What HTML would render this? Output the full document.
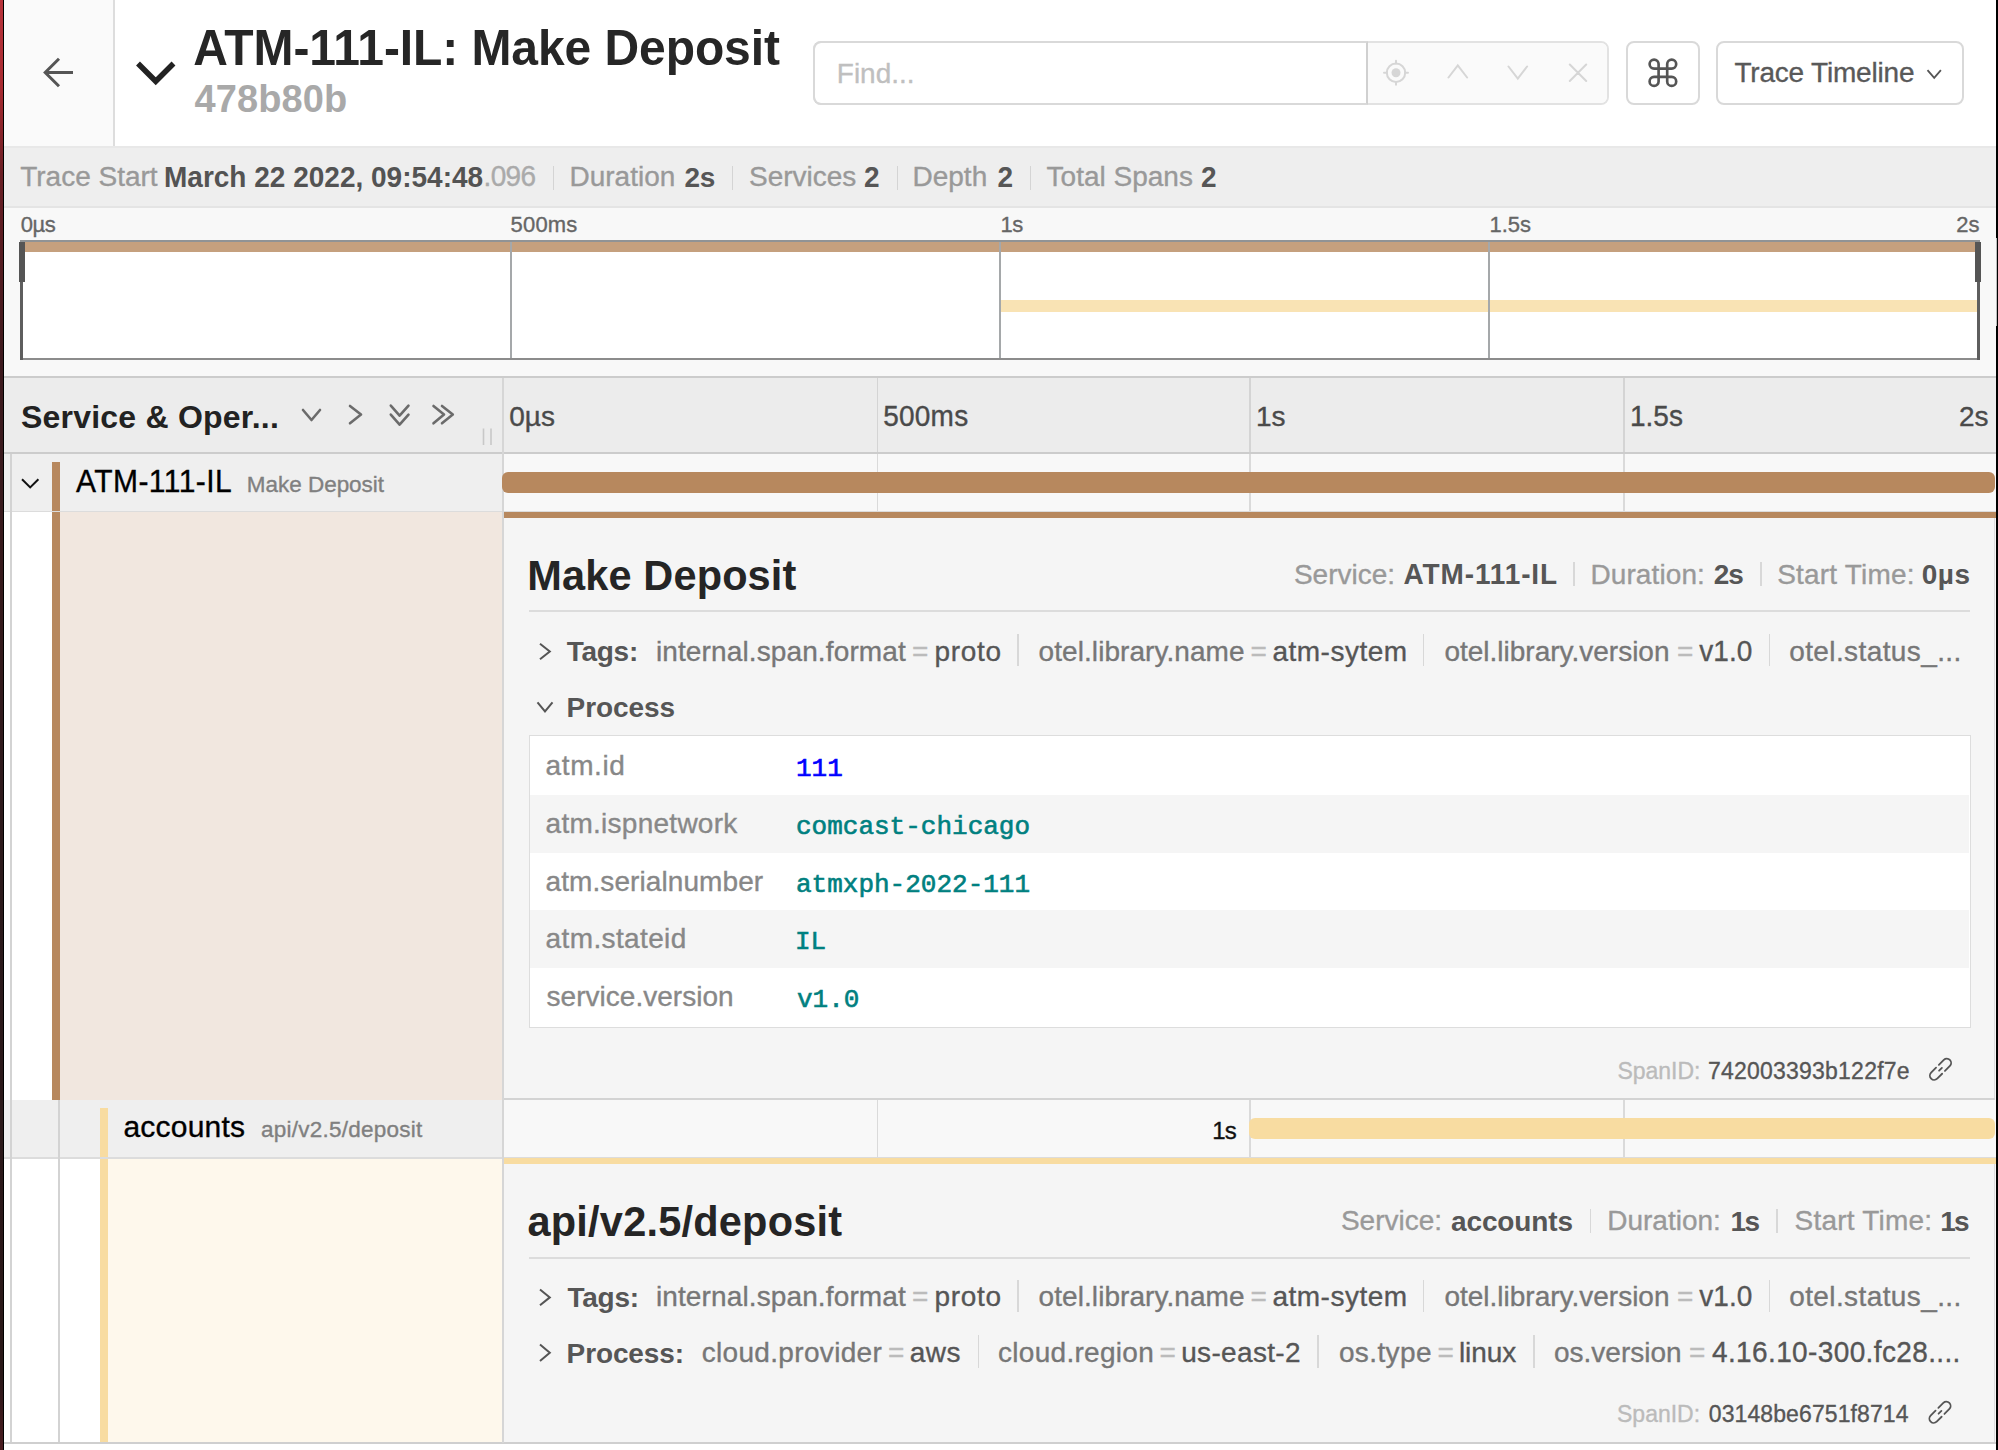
<!DOCTYPE html>
<html><head><meta charset="utf-8"><title>Jaeger trace</title>
<style>
*{box-sizing:border-box;margin:0;padding:0}
html,body{width:1998px;height:1450px;overflow:hidden;background:#fff;font-family:"Liberation Sans",sans-serif;position:relative}
.a{position:absolute}
.t{position:absolute;white-space:nowrap;line-height:1}
svg.ov{position:absolute;left:0;top:0}
</style></head><body>
<div class="a" style="left:0px;top:0px;width:3px;height:1450px;background:linear-gradient(#b8343c 0%,#a82b31 6%,#6a1f25 12%,#3d1a1e 25%,#2c1a1b 60%,#2a1819 95%,#4a1c20 100%);"></div>
<div class="a" style="left:3px;top:0px;width:1px;height:1450px;background:#000;"></div>
<div class="a" style="left:1996px;top:0px;width:2px;height:1450px;background:#000;"></div>
<div class="a" style="left:1995px;top:0px;width:1px;height:1450px;background:#fff;"></div>
<div class="a" style="left:1996px;top:238px;width:1px;height:88px;background:#bbb;"></div>
<div class="a" style="left:4px;top:0px;width:110px;height:146px;background:#fafafa;"></div>
<div class="a" style="left:113px;top:0px;width:1.5px;height:146px;background:#dddddd;"></div>
<div class="a" style="left:4px;top:145.5px;width:1992px;height:2.0px;background:#e8e8e8;"></div>
<div class="a" style="left:813px;top:41px;width:796px;height:64px;border:2px solid #e2e2e2;border-radius:8px;background:#fff"></div>
<div class="a" style="left:813px;top:41px;width:555px;height:64px;border:2px solid #d9d9d9;border-right-color:#d0d0d0;border-radius:8px 0 0 8px"></div>
<div class="a" style="left:1368px;top:43px;width:239px;height:60px;background:#fafafa;border-radius:0 6px 6px 0"></div>
<div class="a" style="left:1626px;top:41px;width:74px;height:64px;border:2px solid #d9d9d9;border-radius:8px;background:#fff"></div>
<div class="a" style="left:1716px;top:41px;width:248px;height:64px;border:2px solid #d9d9d9;border-radius:8px;background:#fff"></div>
<div class="a" style="left:4px;top:147.5px;width:1992px;height:59.0px;background:#eeeeee;"></div>
<div class="a" style="left:4px;top:206px;width:1992px;height:1.5px;background:#e4e4e4;"></div>
<div class="a" style="left:553px;top:166px;width:1.2000000000000455px;height:24px;background:#d4d4d4;"></div>
<div class="a" style="left:732px;top:166px;width:1.2000000000000455px;height:24px;background:#d4d4d4;"></div>
<div class="a" style="left:897px;top:166px;width:1.2000000000000455px;height:24px;background:#d4d4d4;"></div>
<div class="a" style="left:1030px;top:166px;width:1.2000000000000455px;height:24px;background:#d4d4d4;"></div>
<div class="a" style="left:4px;top:207.5px;width:1992px;height:168.5px;background:#f8f8f8;"></div>
<div class="a" style="left:4px;top:376px;width:1992px;height:2px;background:#cccccc;"></div>
<div class="a" style="left:20px;top:240px;width:1960px;height:120px;background:#fff;"></div>
<div class="a" style="left:20px;top:240px;width:1960px;height:2px;background:#909395;"></div>
<div class="a" style="left:22px;top:242px;width:1955px;height:10px;background:#c5a07e;"></div>
<div class="a" style="left:1000px;top:300px;width:977px;height:12px;background:#f9e3b4;"></div>
<div class="a" style="left:510px;top:242px;width:2px;height:116px;background:#a5a8aa;"></div>
<div class="a" style="left:999px;top:242px;width:2px;height:116px;background:#a5a8aa;"></div>
<div class="a" style="left:1488px;top:242px;width:2px;height:116px;background:#a5a8aa;"></div>
<div class="a" style="left:20px;top:358px;width:1960px;height:2px;background:#8c8c8c;"></div>
<div class="a" style="left:20px;top:242px;width:3px;height:118px;background:#5e5e5e;"></div>
<div class="a" style="left:1977px;top:242px;width:3px;height:118px;background:#5e5e5e;"></div>
<div class="a" style="left:19px;top:242px;width:6px;height:40px;background:#555;"></div>
<div class="a" style="left:1975px;top:242px;width:6px;height:40px;background:#555;"></div>
<div class="a" style="left:4px;top:378px;width:1992px;height:74px;background:#ececec;"></div>
<div class="a" style="left:4px;top:452px;width:1992px;height:2px;background:#cccccc;"></div>
<div class="a" style="left:4px;top:454px;width:498px;height:57px;background:#efefef;"></div>
<div class="a" style="left:504px;top:454px;width:1492px;height:57px;background:#f8f8f8;"></div>
<div class="a" style="left:4px;top:511px;width:1992px;height:1px;background:#dcdcdc;"></div>
<div class="a" style="left:4px;top:512px;width:48px;height:588px;background:#fff;"></div>
<div class="a" style="left:60px;top:512px;width:442px;height:588px;background:#f1e7df;"></div>
<div class="a" style="left:502px;top:512px;width:1494px;height:588px;background:#f5f5f5;"></div>
<div class="a" style="left:504px;top:512px;width:1492px;height:6px;background:#b7885e;"></div>
<div class="a" style="left:1993.5px;top:518px;width:1.5px;height:582px;background:#dcdcdc;"></div>
<div class="a" style="left:504px;top:1098px;width:1491px;height:2px;background:#d3d3d3;"></div>
<div class="a" style="left:4px;top:1100px;width:498px;height:57px;background:#efefef;"></div>
<div class="a" style="left:504px;top:1100px;width:1492px;height:57px;background:#f8f8f8;"></div>
<div class="a" style="left:4px;top:1157px;width:1992px;height:1.5px;background:#dcdcdc;"></div>
<div class="a" style="left:4px;top:1158.5px;width:96px;height:284.5px;background:#fff;"></div>
<div class="a" style="left:108px;top:1158.5px;width:394px;height:284.5px;background:#fef8ec;"></div>
<div class="a" style="left:502px;top:1158px;width:1494px;height:285px;background:#f5f5f5;"></div>
<div class="a" style="left:504px;top:1158px;width:1492px;height:6px;background:#f8dca1;"></div>
<div class="a" style="left:1993.5px;top:1164px;width:1.5px;height:279px;background:#dcdcdc;"></div>
<div class="a" style="left:4px;top:1441.5px;width:1992px;height:2.0px;background:#cfcfcf;"></div>
<div class="a" style="left:502px;top:378px;width:2px;height:1065px;background:#d6d6d6;"></div>
<div class="a" style="left:876.5px;top:378px;width:1.6000000000000227px;height:74px;background:#d4d4d4;"></div>
<div class="a" style="left:876.5px;top:454px;width:1.6000000000000227px;height:57px;background:#dadada;"></div>
<div class="a" style="left:876.5px;top:1100px;width:1.6000000000000227px;height:57px;background:#dadada;"></div>
<div class="a" style="left:1249.2px;top:378px;width:1.599999999999909px;height:74px;background:#d4d4d4;"></div>
<div class="a" style="left:1249.2px;top:454px;width:1.599999999999909px;height:57px;background:#dadada;"></div>
<div class="a" style="left:1249.2px;top:1100px;width:1.599999999999909px;height:57px;background:#dadada;"></div>
<div class="a" style="left:1623px;top:378px;width:1.599999999999909px;height:74px;background:#d4d4d4;"></div>
<div class="a" style="left:1623px;top:454px;width:1.599999999999909px;height:57px;background:#dadada;"></div>
<div class="a" style="left:1623px;top:1100px;width:1.599999999999909px;height:57px;background:#dadada;"></div>
<div class="a" style="left:10px;top:454px;width:2px;height:987.5px;background:#d3d3d3;"></div>
<div class="a" style="left:58px;top:1100px;width:2px;height:341.5px;background:#d3d3d3;"></div>
<div class="a" style="left:52px;top:462px;width:8px;height:49px;background:#b7885e;"></div>
<div class="a" style="left:52px;top:512px;width:8px;height:588px;background:#b7885e;"></div>
<div class="a" style="left:100px;top:1108px;width:8px;height:49px;background:#f8dca1;"></div>
<div class="a" style="left:100px;top:1158.5px;width:8px;height:283.0px;background:#f8dca1;"></div>
<div class="a" style="left:502px;top:472px;width:1493px;height:21px;background:#b7885e;border-radius:6px"></div>
<div class="a" style="left:1249px;top:1118px;width:746px;height:21px;background:#f8dca1;border-radius:6px"></div>
<div class="a" style="left:529px;top:610px;width:1441px;height:2px;background:#dcdcdc;"></div>
<div class="a" style="left:528.5px;top:735px;width:1442px;height:293px;border:1.6px solid #dddddd;background:#fff"></div>
<div class="a" style="left:530px;top:794.8px;width:1438.5px;height:57.80000000000007px;background:#f5f5f5;"></div>
<div class="a" style="left:530px;top:910.4px;width:1438.5px;height:57.89999999999998px;background:#f5f5f5;"></div>
<div class="a" style="left:529px;top:1257px;width:1441px;height:2px;background:#dcdcdc;"></div>
<div class="a" style="left:1573.05px;top:562.4px;width:1.5px;height:24.0px;background:#d8d8d8;"></div>
<div class="a" style="left:1760.45px;top:562.4px;width:1.5px;height:24.0px;background:#d8d8d8;"></div>
<div class="a" style="left:1589.95px;top:1209px;width:1.5px;height:24px;background:#d8d8d8;"></div>
<div class="a" style="left:1776.25px;top:1209px;width:1.5px;height:24px;background:#d8d8d8;"></div>
<div class="a" style="left:1017.25px;top:634.0px;width:1.5px;height:32.39999999999998px;background:#d8d8d8;"></div>
<div class="a" style="left:1422.95px;top:634.0px;width:1.5px;height:32.39999999999998px;background:#d8d8d8;"></div>
<div class="a" style="left:1768.55px;top:634.0px;width:1.5px;height:32.39999999999998px;background:#d8d8d8;"></div>
<div class="a" style="left:1017.25px;top:1279.5px;width:1.5px;height:32.399999999999864px;background:#d8d8d8;"></div>
<div class="a" style="left:1422.95px;top:1279.5px;width:1.5px;height:32.399999999999864px;background:#d8d8d8;"></div>
<div class="a" style="left:1768.55px;top:1279.5px;width:1.5px;height:32.399999999999864px;background:#d8d8d8;"></div>
<div class="a" style="left:977.85px;top:1335.3px;width:1.5px;height:32.399999999999864px;background:#d8d8d8;"></div>
<div class="a" style="left:1317.25px;top:1335.3px;width:1.5px;height:32.399999999999864px;background:#d8d8d8;"></div>
<div class="a" style="left:1533.45px;top:1335.3px;width:1.5px;height:32.399999999999864px;background:#d8d8d8;"></div>
<svg class="ov" width="1998" height="1450" viewBox="0 0 1998 1450">
<path d="M73 72.5H46M59 58.7L45.2 72.5L59 86.3" fill="none" stroke="#555" stroke-width="3"/>
<path d="M138 63.5L155.75 81.25L173.5 63.5" fill="none" stroke="#222" stroke-width="5.5"/>
<g fill="none" stroke="#d6d6d6" stroke-width="2" stroke-linecap="round"><circle cx="1396" cy="72.8" r="9.2"/><path d="M1396 60.8V63.6M1396 82V84.8M1384 72.8H1386.8M1405.2 72.8H1408"/><path d="M1448.5 77.5L1457.8 65.5L1467.1 77.5M1508.5 66.5L1517.8 78.5L1527.1 66.5M1569.8 64.5L1586.2 81M1586.2 64.5L1569.8 81"/></g>
<circle cx="1396" cy="72.8" r="4.5" fill="#d6d6d6"/>
<path d="M1654.1 68.6H1671.7M1654.1 76.9H1671.7M1658.6 64.1V81.4M1667.2 64.1V81.4M1658.6 64.1A4.5 4.5 0 1 0 1654.1 68.6M1667.2 64.1A4.5 4.5 0 1 1 1671.7 68.6M1671.7 76.9A4.5 4.5 0 1 1 1667.2 81.4M1654.1 76.9A4.5 4.5 0 1 0 1658.6 81.4" fill="none" stroke="#555" stroke-width="2.66"/>
<path d="M1927.5 70.2L1934.2 77.8L1940.9 70.2" fill="none" stroke="#555" stroke-width="1.8"/>
<g fill="none" stroke="#6b6b6b" stroke-width="2.6" stroke-linecap="round" stroke-linejoin="round"><path d="M303 410L311.5 420L320 410"/><path d="M350 406L361 414.6L350 423.3"/><path d="M390.8 405.6L399.6 415.6L408.5 405.6M390.8 414.6L399.6 424.6L408.5 414.6"/><path d="M433.5 406L444 414.6L433.5 423.3M442 406L452.8 414.6L442 423.3"/></g>
<path d="M483.5 428.5V445M491 428.5V445" stroke="#c8c8c8" stroke-width="1.6"/>
<path d="M22 479.2L30.2 487.4L38.4 479.2" fill="none" stroke="#111" stroke-width="2"/>
<g fill="none" stroke="#555" stroke-width="2"><path d="M540 643.8L549.8 651.5L540 659.2"/><path d="M537.5 702.3L545 711.5L552.5 702.3"/><path d="M540 1289.5L549.8 1297.4L540 1305.2"/><path d="M540 1344.5L549.8 1352.7L540 1360.9"/></g>
<path d="M1938.87 1064.85 L1943.82 1059.90 A4.3 4.3 0 0 1 1949.90 1065.98 L1944.95 1070.93 M1942.13 1073.75 L1937.18 1078.70 A4.3 4.3 0 0 1 1931.10 1072.62 L1936.05 1067.67 M1939.09 1070.71 L1941.91 1067.89" fill="none" stroke="#555" stroke-width="1.8" stroke-linecap="round"/>
<path d="M1938.37 1407.85 L1943.32 1402.90 A4.3 4.3 0 0 1 1949.40 1408.98 L1944.45 1413.93 M1941.63 1416.75 L1936.68 1421.70 A4.3 4.3 0 0 1 1930.60 1415.62 L1935.55 1410.67 M1938.59 1413.71 L1941.41 1410.89" fill="none" stroke="#555" stroke-width="1.8" stroke-linecap="round"/>
</svg>
<div class="t" style='left:193.30px;top:24.70px;font-size:48px;color:#262626;font-weight:bold;letter-spacing:-0.082px;transform-origin:0 40px;transform:scaleY(1.0210526315789474)'>ATM-111-IL: Make Deposit</div>
<div class="t" style='left:194.50px;top:79.90px;font-size:38px;color:#a9a9a9;font-weight:bold;letter-spacing:0.103px;transform-origin:0 32px;transform:scaleY(1.0285714285714285)'>478b80b</div>
<div class="t" style='left:836.80px;top:59.50px;font-size:28px;color:#bfbfbf;transform-origin:0 23px;transform:scaleY(1.01);-webkit-text-stroke:0.35px #bfbfbf'>Find...</div>
<div class="t" style='left:1734.40px;top:59.00px;font-size:28px;color:#595959;letter-spacing:-0.193px;transform-origin:0 23px;transform:scaleY(1.0061538461538462);-webkit-text-stroke:0.35px #595959'>Trace Timeline</div>
<div class="t" style='left:20.20px;top:163.30px;font-size:28px;color:#999;transform-origin:0 23px;transform:scaleY(1.008);-webkit-text-stroke:0.35px #999'>Trace Start</div>
<div class="t" style='left:164.00px;top:163.80px;font-size:28px;color:#535353;font-weight:bold;transform-origin:0 23px;transform:scaleY(1.0305882352941176)'>March 22 2022, 09:54:48</div>
<div class="t" style='left:483.50px;top:163.30px;font-size:28px;color:#aaa;letter-spacing:-0.641px;transform-origin:0 23px;transform:scaleY(1.04);-webkit-text-stroke:0.35px #aaa'>.096</div>
<div class="t" style='left:569.50px;top:163.30px;font-size:28px;color:#999;transform-origin:0 23px;transform:scaleY(1.005);-webkit-text-stroke:0.35px #999'>Duration</div>
<div class="t" style='left:684.50px;top:163.80px;font-size:28px;color:#565656;font-weight:bold;letter-spacing:-0.372px;transform-origin:0 23px;transform:scaleY(1.02)'>2s</div>
<div class="t" style='left:749.00px;top:163.30px;font-size:28px;color:#999;transform-origin:0 23px;transform:scaleY(1.005);-webkit-text-stroke:0.35px #999'>Services</div>
<div class="t" style='left:864.00px;top:163.80px;font-size:28px;color:#565656;font-weight:bold;transform-origin:0 23px;transform:scaleY(1.04)'>2</div>
<div class="t" style='left:912.50px;top:163.30px;font-size:28px;color:#999;transform-origin:0 23px;transform:scaleY(1.008);-webkit-text-stroke:0.35px #999'>Depth</div>
<div class="t" style='left:997.50px;top:163.80px;font-size:28px;color:#565656;font-weight:bold;transform-origin:0 23px;transform:scaleY(1.04)'>2</div>
<div class="t" style='left:1046.60px;top:163.30px;font-size:28px;color:#999;transform-origin:0 23px;transform:scaleY(1.008);-webkit-text-stroke:0.35px #999'>Total Spans</div>
<div class="t" style='left:1201.00px;top:163.80px;font-size:28px;color:#565656;font-weight:bold;transform-origin:0 23px;transform:scaleY(1.04)'>2</div>
<div class="t" style='left:20.70px;top:213.50px;font-size:22px;color:#666;letter-spacing:-0.406px;transform-origin:0 18px;transform:scaleY(1.0133333333333334);-webkit-text-stroke:0.35px #666'>0µs</div>
<div class="t" style='left:510.60px;top:213.50px;font-size:22px;color:#666;letter-spacing:0.167px;transform-origin:0 18px;transform:scaleY(1.024);-webkit-text-stroke:0.35px #666'>500ms</div>
<div class="t" style='left:1000.50px;top:213.50px;font-size:22px;color:#666;letter-spacing:-0.435px;transform-origin:0 18px;transform:scaleY(1.02);-webkit-text-stroke:0.35px #666'>1s</div>
<div class="t" style='left:1489.50px;top:213.50px;font-size:22px;color:#666;transform-origin:0 18px;transform:scaleY(1.0266666666666666);-webkit-text-stroke:0.35px #666'>1.5s</div>
<div class="t" style='left:1956.36px;top:213.50px;font-size:22px;color:#666;transform-origin:0 18px;transform:scaleY(1.02);-webkit-text-stroke:0.35px #666'>2s</div>
<div class="t" style='left:20.90px;top:400.80px;font-size:32px;color:#222;font-weight:bold;letter-spacing:0.227px;transform-origin:0 27px;transform:scaleY(1.0072727272727273)'>Service &amp; Oper...</div>
<div class="t" style='left:509.30px;top:402.60px;font-size:28px;color:#4a4a4a;transform-origin:0 23px;transform:scaleY(1.0133333333333334);-webkit-text-stroke:0.35px #4a4a4a'>0µs</div>
<div class="t" style='left:883.20px;top:402.60px;font-size:28px;color:#4a4a4a;letter-spacing:0.240px;transform-origin:0 23px;transform:scaleY(1.024);-webkit-text-stroke:0.35px #4a4a4a'>500ms</div>
<div class="t" style='left:1256.00px;top:402.60px;font-size:28px;color:#4a4a4a;transform-origin:0 23px;transform:scaleY(1.02);-webkit-text-stroke:0.35px #4a4a4a'>1s</div>
<div class="t" style='left:1630.00px;top:402.60px;font-size:28px;color:#4a4a4a;transform-origin:0 23px;transform:scaleY(1.0266666666666666);-webkit-text-stroke:0.35px #4a4a4a'>1.5s</div>
<div class="t" style='left:1958.93px;top:402.60px;font-size:28px;color:#4a4a4a;transform-origin:0 23px;transform:scaleY(1.02);-webkit-text-stroke:0.35px #4a4a4a'>2s</div>
<div class="t" style='left:76.00px;top:466.60px;font-size:30px;color:#000;letter-spacing:0.443px;transform-origin:0 25px;transform:scaleY(1.04);-webkit-text-stroke:0.35px #000'>ATM-111-IL</div>
<div class="t" style='left:246.80px;top:473.50px;font-size:22.5px;color:#808080;letter-spacing:-0.028px;transform-origin:0 18px;transform:scaleY(1.0072727272727273);-webkit-text-stroke:0.35px #808080'>Make Deposit</div>
<div class="t" style='left:527.30px;top:554.60px;font-size:41.5px;color:#252525;font-weight:bold;letter-spacing:0.136px;transform-origin:0 35px;transform:scaleY(1.0072727272727273)'>Make Deposit</div>
<div class="t" style='left:1293.90px;top:560.50px;font-size:28px;color:#999;transform-origin:0 23px;transform:scaleY(1.0057142857142858);-webkit-text-stroke:0.35px #999'>Service:</div>
<div class="t" style='left:1403.50px;top:561.00px;font-size:28px;color:#565656;font-weight:bold;letter-spacing:0.875px;transform-origin:0 23px;transform:scaleY(1.04)'>ATM-111-IL</div>
<div class="t" style='left:1590.40px;top:560.50px;font-size:28px;color:#999;letter-spacing:0.108px;transform-origin:0 23px;transform:scaleY(1.005);-webkit-text-stroke:0.35px #999'>Duration:</div>
<div class="t" style='left:1713.70px;top:561.00px;font-size:28px;color:#565656;font-weight:bold;letter-spacing:-1.072px;transform-origin:0 23px;transform:scaleY(1.02)'>2s</div>
<div class="t" style='left:1777.20px;top:560.50px;font-size:28px;color:#999;letter-spacing:0.201px;transform-origin:0 23px;transform:scaleY(1.008888888888889);-webkit-text-stroke:0.35px #999'>Start Time:</div>
<div class="t" style='left:1921.70px;top:561.00px;font-size:28px;color:#565656;font-weight:bold;letter-spacing:0.497px;transform-origin:0 23px;transform:scaleY(1.0133333333333334)'>0µs</div>
<div class="t" style='left:566.80px;top:638.30px;font-size:28px;color:#565656;font-weight:bold;letter-spacing:-0.293px;transform-origin:0 23px;transform:scaleY(1.01)'>Tags:</div>
<div class="t" style='left:655.90px;top:637.80px;font-size:28px;color:#777;letter-spacing:0.127px;-webkit-text-stroke:0.35px #777'>internal.span.format</div>
<div class="t" style='left:912.00px;top:637.80px;font-size:28px;color:#bbb;-webkit-text-stroke:0.35px #bbb'>=</div>
<div class="t" style='left:934.40px;top:637.80px;font-size:28px;color:#565656;letter-spacing:0.688px;-webkit-text-stroke:0.35px #565656'>proto</div>
<div class="t" style='left:1038.60px;top:637.80px;font-size:28px;color:#777;letter-spacing:0.067px;-webkit-text-stroke:0.35px #777'>otel.library.name</div>
<div class="t" style='left:1250.40px;top:637.80px;font-size:28px;color:#bbb;-webkit-text-stroke:0.35px #bbb'>=</div>
<div class="t" style='left:1272.50px;top:637.80px;font-size:28px;color:#565656;letter-spacing:0.481px;-webkit-text-stroke:0.35px #565656'>atm-sytem</div>
<div class="t" style='left:1444.40px;top:637.80px;font-size:28px;color:#777;-webkit-text-stroke:0.35px #777'>otel.library.version</div>
<div class="t" style='left:1677.00px;top:637.80px;font-size:28px;color:#bbb;-webkit-text-stroke:0.35px #bbb'>=</div>
<div class="t" style='left:1699.30px;top:637.80px;font-size:28px;color:#565656;letter-spacing:0.016px;transform-origin:0 23px;transform:scaleY(1.0266666666666666);-webkit-text-stroke:0.35px #565656'>v1.0</div>
<div class="t" style='left:1789.20px;top:637.80px;font-size:28px;color:#777;letter-spacing:0.396px;-webkit-text-stroke:0.35px #777'>otel.status_...</div>
<div class="t" style='left:566.60px;top:694.20px;font-size:28px;color:#565656;font-weight:bold;letter-spacing:-0.082px;transform-origin:0 23px;transform:scaleY(1.0057142857142858)'>Process</div>
<div class="t" style='left:545.60px;top:752.00px;font-size:28px;color:#888;letter-spacing:0.605px;-webkit-text-stroke:0.35px #888'>atm.id</div>
<div class="t" style='left:796.00px;top:756.00px;font-size:26px;color:#0000ff;font-family:"Liberation Mono",monospace;-webkit-text-stroke:0.6px #0000ff'>111</div>
<div class="t" style='left:545.60px;top:809.83px;font-size:28px;color:#888;letter-spacing:0.262px;-webkit-text-stroke:0.35px #888'>atm.ispnetwork</div>
<div class="t" style='left:796.00px;top:813.83px;font-size:26px;color:#008080;font-family:"Liberation Mono",monospace;-webkit-text-stroke:0.6px #008080'>comcast-chicago</div>
<div class="t" style='left:545.60px;top:867.66px;font-size:28px;color:#888;letter-spacing:0.081px;-webkit-text-stroke:0.35px #888'>atm.serialnumber</div>
<div class="t" style='left:796.00px;top:871.66px;font-size:26px;color:#008080;font-family:"Liberation Mono",monospace;-webkit-text-stroke:0.6px #008080'>atmxph-2022-111</div>
<div class="t" style='left:545.60px;top:925.49px;font-size:28px;color:#888;letter-spacing:0.372px;-webkit-text-stroke:0.35px #888'>atm.stateid</div>
<div class="t" style='left:795.00px;top:929.49px;font-size:26px;color:#008080;font-family:"Liberation Mono",monospace;-webkit-text-stroke:0.6px #008080'>IL</div>
<div class="t" style='left:546.60px;top:983.32px;font-size:28px;color:#888;letter-spacing:0.017px;-webkit-text-stroke:0.35px #888'>service.version</div>
<div class="t" style='left:797.00px;top:987.32px;font-size:26px;color:#008080;font-family:"Liberation Mono",monospace;-webkit-text-stroke:0.6px #008080'>v1.0</div>
<div class="t" style='left:1617.40px;top:1060.30px;font-size:23px;color:#bbb;transform-origin:0 19px;transform:scaleY(1.02);-webkit-text-stroke:0.35px #bbb'>SpanID:</div>
<div class="t" style='left:1707.90px;top:1060.30px;font-size:23px;color:#565656;letter-spacing:0.229px;transform-origin:0 19px;transform:scaleY(1.0325);-webkit-text-stroke:0.35px #565656'>742003393b122f7e</div>
<div class="t" style='left:123.40px;top:1112.30px;font-size:30px;color:#000;letter-spacing:0.232px;-webkit-text-stroke:0.35px #000'>accounts</div>
<div class="t" style='left:261.00px;top:1119.30px;font-size:22.5px;color:#808080;letter-spacing:0.243px;transform-origin:0 18px;transform:scaleY(1.0061538461538462);-webkit-text-stroke:0.35px #808080'>api/v2.5/deposit</div>
<div class="t" style='left:1212.30px;top:1118.60px;font-size:24px;color:#111;letter-spacing:-0.848px;transform-origin:0 20px;transform:scaleY(1.02);-webkit-text-stroke:0.35px #111'>1s</div>
<div class="t" style='left:527.50px;top:1200.60px;font-size:41.5px;color:#252525;font-weight:bold;letter-spacing:0.218px;transform-origin:0 35px;transform:scaleY(1.0061538461538462)'>api/v2.5/deposit</div>
<div class="t" style='left:1340.90px;top:1207.20px;font-size:28px;color:#999;transform-origin:0 23px;transform:scaleY(1.0057142857142858);-webkit-text-stroke:0.35px #999'>Service:</div>
<div class="t" style='left:1451.00px;top:1207.70px;font-size:28px;color:#565656;font-weight:bold;letter-spacing:-0.122px'>accounts</div>
<div class="t" style='left:1607.20px;top:1207.20px;font-size:28px;color:#999;transform-origin:0 23px;transform:scaleY(1.005);-webkit-text-stroke:0.35px #999'>Duration:</div>
<div class="t" style='left:1730.50px;top:1207.70px;font-size:28px;color:#565656;font-weight:bold;letter-spacing:-1.572px;transform-origin:0 23px;transform:scaleY(1.02)'>1s</div>
<div class="t" style='left:1794.50px;top:1207.20px;font-size:28px;color:#999;letter-spacing:0.211px;transform-origin:0 23px;transform:scaleY(1.008888888888889);-webkit-text-stroke:0.35px #999'>Start Time:</div>
<div class="t" style='left:1940.20px;top:1207.70px;font-size:28px;color:#565656;font-weight:bold;letter-spacing:-1.772px;transform-origin:0 23px;transform:scaleY(1.02)'>1s</div>
<div class="t" style='left:567.60px;top:1283.80px;font-size:28px;color:#565656;font-weight:bold;letter-spacing:-0.293px;transform-origin:0 23px;transform:scaleY(1.01)'>Tags:</div>
<div class="t" style='left:655.90px;top:1283.30px;font-size:28px;color:#777;letter-spacing:0.127px;-webkit-text-stroke:0.35px #777'>internal.span.format</div>
<div class="t" style='left:912.00px;top:1283.30px;font-size:28px;color:#bbb;-webkit-text-stroke:0.35px #bbb'>=</div>
<div class="t" style='left:934.40px;top:1283.30px;font-size:28px;color:#565656;letter-spacing:0.688px;-webkit-text-stroke:0.35px #565656'>proto</div>
<div class="t" style='left:1038.60px;top:1283.30px;font-size:28px;color:#777;letter-spacing:0.067px;-webkit-text-stroke:0.35px #777'>otel.library.name</div>
<div class="t" style='left:1250.40px;top:1283.30px;font-size:28px;color:#bbb;-webkit-text-stroke:0.35px #bbb'>=</div>
<div class="t" style='left:1272.50px;top:1283.30px;font-size:28px;color:#565656;letter-spacing:0.481px;-webkit-text-stroke:0.35px #565656'>atm-sytem</div>
<div class="t" style='left:1444.40px;top:1283.30px;font-size:28px;color:#777;-webkit-text-stroke:0.35px #777'>otel.library.version</div>
<div class="t" style='left:1677.00px;top:1283.30px;font-size:28px;color:#bbb;-webkit-text-stroke:0.35px #bbb'>=</div>
<div class="t" style='left:1699.30px;top:1283.30px;font-size:28px;color:#565656;letter-spacing:0.016px;transform-origin:0 23px;transform:scaleY(1.0266666666666666);-webkit-text-stroke:0.35px #565656'>v1.0</div>
<div class="t" style='left:1789.20px;top:1283.30px;font-size:28px;color:#777;letter-spacing:0.396px;-webkit-text-stroke:0.35px #777'>otel.status_...</div>
<div class="t" style='left:566.60px;top:1339.60px;font-size:28px;color:#565656;font-weight:bold;letter-spacing:-0.124px;transform-origin:0 23px;transform:scaleY(1.0057142857142858)'>Process:</div>
<div class="t" style='left:701.70px;top:1339.10px;font-size:28px;color:#777;letter-spacing:0.327px;-webkit-text-stroke:0.35px #777'>cloud.provider</div>
<div class="t" style='left:887.90px;top:1339.10px;font-size:28px;color:#bbb;-webkit-text-stroke:0.35px #bbb'>=</div>
<div class="t" style='left:909.80px;top:1339.10px;font-size:28px;color:#565656;letter-spacing:0.454px;-webkit-text-stroke:0.35px #565656'>aws</div>
<div class="t" style='left:998.00px;top:1339.10px;font-size:28px;color:#777;letter-spacing:0.293px;-webkit-text-stroke:0.35px #777'>cloud.region</div>
<div class="t" style='left:1159.60px;top:1339.10px;font-size:28px;color:#bbb;-webkit-text-stroke:0.35px #bbb'>=</div>
<div class="t" style='left:1181.20px;top:1339.10px;font-size:28px;color:#565656;letter-spacing:0.332px;transform-origin:0 23px;transform:scaleY(1.0057142857142858);-webkit-text-stroke:0.35px #565656'>us-east-2</div>
<div class="t" style='left:1338.90px;top:1339.10px;font-size:28px;color:#777;letter-spacing:0.383px;-webkit-text-stroke:0.35px #777'>os.type</div>
<div class="t" style='left:1437.40px;top:1339.10px;font-size:28px;color:#bbb;-webkit-text-stroke:0.35px #bbb'>=</div>
<div class="t" style='left:1459.00px;top:1339.10px;font-size:28px;color:#565656;letter-spacing:-0.096px;-webkit-text-stroke:0.35px #565656'>linux</div>
<div class="t" style='left:1554.00px;top:1339.10px;font-size:28px;color:#777;-webkit-text-stroke:0.35px #777'>os.version</div>
<div class="t" style='left:1689.00px;top:1339.10px;font-size:28px;color:#bbb;-webkit-text-stroke:0.35px #bbb'>=</div>
<div class="t" style='left:1712.00px;top:1339.10px;font-size:28px;color:#565656;letter-spacing:0.374px;transform-origin:0 23px;transform:scaleY(1.0333333333333334);-webkit-text-stroke:0.35px #565656'>4.16.10-300.fc28....</div>
<div class="t" style='left:1617.00px;top:1403.30px;font-size:23px;color:#bbb;transform-origin:0 19px;transform:scaleY(1.02);-webkit-text-stroke:0.35px #bbb'>SpanID:</div>
<div class="t" style='left:1708.80px;top:1403.30px;font-size:23px;color:#565656;letter-spacing:0.095px;transform-origin:0 19px;transform:scaleY(1.0325);-webkit-text-stroke:0.35px #565656'>03148be6751f8714</div>
</body></html>
